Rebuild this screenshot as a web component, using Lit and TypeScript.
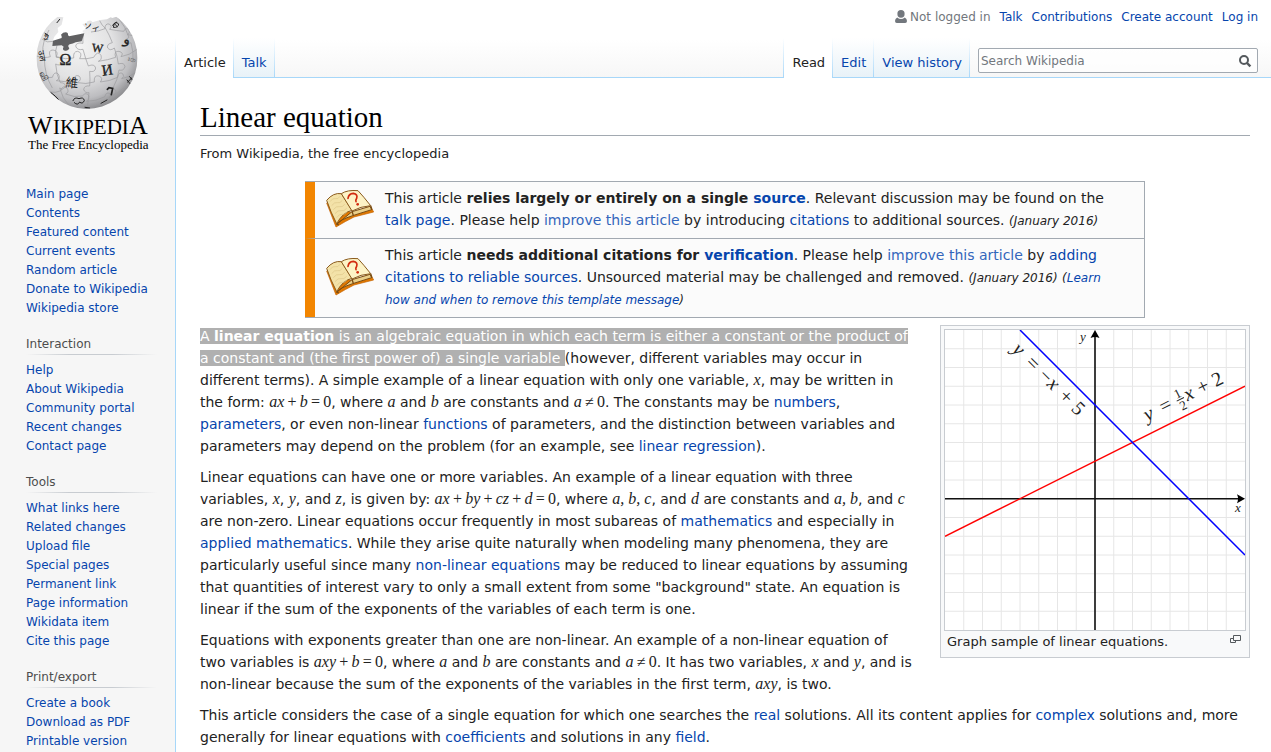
import { LitElement, html, svg, css } from "lit";
import { customElement } from "lit/decorators.js";

@customElement("wiki-logo")
class WikiLogo extends LitElement {
  static styles = css`
    :host { display: block; }
    svg { display: block; width: 160px; height: 160px; }
    .word { font-family: "Liberation Serif", serif; fill: #000; }
    .glyph { font-family: "Liberation Serif", "Noto Sans CJK TC", serif; fill: #222; }
  `;
  render() {
    return html`<svg viewBox="0 0 160 160" role="img" aria-label="Wikipedia, The Free Encyclopedia">
      <defs>
        <radialGradient id="ball" cx="0.42" cy="0.36" r="0.66">
          <stop offset="0" stop-color="#f4f4f4" />
          <stop offset="0.5" stop-color="#e2e2e3" />
          <stop offset="0.8" stop-color="#bdbdc0" />
          <stop offset="1" stop-color="#858588" />
        </radialGradient>
        <clipPath id="globe">
          <path d="M103 22 L86 20 A153 153 0 0 0 172 297 A153 153 0 0 0 262 20 L250 24 L245 22 L234 28 L214 30 L190 37 Q188 30 180 32 Q171 33 174 40 L160 42 L166 50 Q176 54 166 59 L160 63 L166 72 L130 80 L71 94 L76 80 L88 66 L86 54 L98 44 Z" />
        </clipPath>
      </defs>
      <g transform="translate(21 10) scale(0.33333)">
        <g clip-path="url(#globe)">
          <rect x="15" y="0" width="315" height="300" fill="url(#ball)" />
          <g fill="none" stroke="#9a9a9d" stroke-width="2">
            <path d="M22 138 q25 8 42 2 q-8 -20 8 -20 q18 2 10 20 q28 10 52 4 q-2 -20 12 -20 q16 4 6 22 q22 2 42 -4 q12 -22 22 -6 q4 14 -8 18 q30 -4 52 -12 q-6 -20 10 -18 q16 4 6 16 q26 -4 48 -22" />
            <path d="M26 196 q22 12 44 6 q6 -20 18 -10 q8 14 -6 20 q26 6 52 0 q2 -20 16 -14 q10 10 -4 20 q24 6 50 -2 q-2 -22 14 -18 q14 6 4 18 q28 -2 52 -14 q4 -20 16 -10 q6 8 -4 14 q22 -4 42 -18" />
            <path d="M60 246 q20 4 36 -4 q4 -18 18 -8 q8 12 -4 18 q26 12 50 6 q12 -14 20 0 q2 12 -8 16 q30 0 56 -14 q2 -14 14 -10 q8 8 0 12 q20 -8 42 -28" />
            <path d="M40 88 q14 12 34 6 M186 66 q24 -2 42 -10 q0 -16 12 -14 q12 6 2 16 q20 4 42 6 q6 -14 16 -4 q4 10 -4 14 l22 4" />
            <path d="M84 106 q-8 20 -2 36 q18 0 18 14 q-6 14 -20 6 q2 34 14 56 q18 0 14 14 q-8 10 -16 2 q8 32 28 52" />
            <path d="M164 70 q-4 20 -2 30 q-20 -4 -22 8 q4 14 22 10 q8 30 16 50 q18 -8 22 6 q-2 14 -18 10 q2 26 0 44 q-16 -2 -18 10 q4 12 16 10 q-2 30 -6 46" />
            <path d="M212 32 q6 14 18 24 q12 20 20 42 q-18 4 -14 16 q8 10 20 0 q10 26 12 48 q18 -6 20 8 q-4 14 -18 10 q-4 30 -18 54 q14 8 6 18 l-18 10" />
            <path d="M268 24 q22 26 32 58 q-14 6 -10 16 q6 8 16 0 q8 26 6 60 M60 60 q-22 40 -18 66 q-12 4 -8 14 q6 8 12 4 q0 50 24 90" />
          </g>
          <g class="glyph" font-size="30" text-anchor="middle">
            <text x="109" y="166" font-size="48" stroke="#222">Ω</text>
            <text x="204" y="126" font-size="36" transform="rotate(6 204 127)" stroke="#222">W</text>
            <text x="237" y="195" font-size="46" transform="rotate(-8 237 195)" stroke="#222">И</text>
            <text x="128" y="232" font-size="38" transform="rotate(5 128 232)">維</text>
            <text x="291" y="100" font-size="40" transform="rotate(14 291 95)" stroke="#222">و</text>
            <text x="186" y="60" font-size="26" transform="rotate(14 186 60)">ソィ</text>
            <text x="38" y="146" font-size="26" transform="rotate(80 38 138)">उल</text>
            <text x="52" y="84" font-size="26" transform="rotate(-40 52 80)">ي</text>
            <text x="44" y="208" font-size="26" transform="rotate(65 44 200)">வி</text>
            <text x="309" y="160" font-size="24" transform="rotate(-80 309 150)" fill="#777">ទី</text>
          </g>
          <g fill="none" stroke="#222" stroke-width="3" stroke-linecap="round">
            <path d="M235 238 l5 -5 l11 2 q-2 10 -4 19" stroke-width="5" />
            <path d="M251 46 q8 -14 18 -4 q-2 12 -16 10 q0 -14 10 -16 m-6 6 l8 8" />
            <path d="M132 272 q4 -12 18 -6 q14 -6 16 6 q-6 12 -14 4 q-6 12 -16 2 M216 280 l18 -10 M66 248 q14 10 22 20" />
            <path d="M296 216 l12 -12 m-14 6 l10 12 m-2 -22 l8 10 M168 292 l14 2 M84 38 l8 -10 M48 70 l10 6" />
          </g>
        </g>
        <path d="M72 92 L98 84 Q99 78 96 74 Q102 67 110 67 Q118 67 117 75 L120 79 L166 70 L158 94 L140 97 Q132 102 122 103 Q114 107 121 115 Q118 124 108 122 Q98 119 104 110 L98 106 L70 108 Z" fill="#606062" />
      </g>
      <g class="word">
        <text x="20" y="134" font-size="26">W</text>
        <text x="45" y="134" font-size="21">IKIPEDI</text>
        <text x="121" y="134" font-size="26">A</text>
        <text x="20" y="149" font-size="13">The Free Encyclopedia</text>
      </g>
    </svg>`;
  }
}

@customElement("book-icon")
class BookIcon extends LitElement {
  static styles = css`
    :host { display: block; }
    svg { display: block; width: 50px; height: 40px; }
  `;
  render() {
    return html`<svg viewBox="0 0 150 120" aria-hidden="true">
      <path d="M2 42 L30 114 Q60 96 84 84 L143 69 L138 60 L80 72 L12 46 Z" fill="#e07800" stroke="#c46200" stroke-width="2" />
      <path d="M32 106 Q42 92 80 80 L137 62 L132 52 L78 68 Z" fill="#e9cf8a" stroke="#7a4b12" stroke-width="3" />
      <path d="M2 34 Q22 10 46 14 L78 64 Q50 70 32 104 Q14 70 2 34 Z" fill="#f3e2a8" stroke="#8a5a1c" stroke-width="3" stroke-linejoin="round" />
      <path d="M46 14 Q64 2 96 5 Q112 22 134 50 Q104 52 78 66 Z" fill="#fdf3c6" stroke="#8a5a1c" stroke-width="3" stroke-linejoin="round" />
      <path d="M78 66 L82 80 M134 50 L138 62 M32 104 L38 108" stroke="#7a4b12" stroke-width="4" />
      <path d="M12 38 q8 -12 16 -9 t14 -7 M17 50 q9 -12 17 -9 t15 -7 M22 62 q9 -12 18 -9 t16 -7 M27 74 q9 -12 18 -9 t17 -7 M32 86 q8 -12 16 -10 t16 -8" fill="none" stroke="#dcc588" stroke-width="2" />
      <path d="M66 28 Q68 14 82 13 Q96 16 92 28 Q88 34 90 38" fill="none" stroke="#d22c10" stroke-width="5" stroke-linecap="round" />
      <circle cx="95" cy="46" r="4" fill="#d22c10" />
    </svg>`;
  }
}

@customElement("line-graph")
class LineGraph extends LitElement {
  static styles = css`
    :host { display: block; }
    svg { display: block; width: 100%; background: #fff; }
    .math { font-family: "Liberation Serif", serif; fill: #222; text-anchor: middle; }
    .var { font-style: italic; }
  `;
  render() {
    const steps = Array.from({ length: 15 }, (_, i) => (i + 1) * 18.75);
    return html`<svg viewBox="0 0 300 300" role="img" aria-label="Two intersecting lines">
      ${steps.map((p) => svg`<path d="M${p} 0V300M0 ${p}H300" stroke="#e6e6e6" stroke-width="1" />`)}
      <path d="M150 300V3M0 168.75H296" stroke="#111" stroke-width="1.6" />
      <path d="M150 0L154.5 8Q150 6 145.5 8Z M300 168.75L292 164.2Q294 168.75 292 173.2Z" fill="#000" />
      <path d="M0 206.25L300 56.25" stroke="#f00" stroke-width="1.5" />
      <path d="M75 0L300 225" stroke="#00f" stroke-width="1.5" />
      <g class="math" font-size="13">
        <text class="var" x="138" y="11">y</text>
        <text class="var" x="293" y="182">x</text>
      </g>
      <g class="math" font-size="20" transform="translate(73 20) rotate(45)">
        <text class="var" x="0" y="5">y</text>
        <text x="20" y="5">=</text>
        <text x="38" y="5">−</text>
        <text class="var" x="49" y="5">x</text>
        <text x="67" y="5">+</text>
        <text x="84" y="5">5</text>
      </g>
      <g class="math" font-size="20" transform="translate(204 85) rotate(-26.57)">
        <text class="var" x="0" y="5">y</text>
        <text x="19" y="5">=</text>
        <text x="35" y="-2" font-size="13">1</text>
        <path d="M31 0H39" stroke="#222" stroke-width="1" />
        <text x="35" y="11" font-size="13">2</text>
        <text class="var" x="45" y="5">x</text>
        <text x="61" y="5">+</text>
        <text x="77" y="5">2</text>
      </g>
    </svg>`;
  }
}

const portals = [
  { title: "", links: ["Main page", "Contents", "Featured content", "Current events", "Random article", "Donate to Wikipedia", "Wikipedia store"] },
  { title: "Interaction", links: ["Help", "About Wikipedia", "Community portal", "Recent changes", "Contact page"] },
  { title: "Tools", links: ["What links here", "Related changes", "Upload file", "Special pages", "Permanent link", "Page information", "Wikidata item", "Cite this page"] },
  { title: "Print/export", links: ["Create a book", "Download as PDF", "Printable version"] },
];

const link = (text: string, cls = "") => html`<a class=${cls} href="#">${text}</a>`;
const v = (text: string) => html`<i class="math">${text}</i>`;

// Sets a formula with thin spaces round its operators; letters are italic, the rest upright.
const formula = (text: string) => html`<i class="math">${text
  .split(" ")
  .map((part, i) => html`${i ? "\u2009" : ""}${/[a-z]/.test(part) ? part : html`<b>${part}</b>`}`)}</i>`;

@customElement("app-root")
class AppRoot extends LitElement {
  static styles = css`
    :host {
      display: block;
      font-family: "DejaVu Sans", sans-serif;
      font-size: 14px;
      line-height: 22px;
      color: #222;
    }
    a { color: #0645ad; text-decoration: none; }
    a:hover { text-decoration: underline; }
    a.ext { color: #36b; }
    ul { list-style: none; margin: 0; padding: 0; }
    .page {
      display: grid;
      grid-template-columns: 175px minmax(0, 1fr);
      min-height: 100vh;
      background: linear-gradient(#fff 50%, #f6f6f6 100%) top / 100% 80px no-repeat #f6f6f6;
    }

    .side { padding: 0 0 0 26px; font-size: 12px; line-height: 19px; }
    .logo { display: block; margin: 0 0 25px -18px; }
    .portal { margin-bottom: 17px; }
    .portal:last-child { margin-bottom: 0; }
    .portal h3 {
      margin: 0 18px 6px 0;
      padding-bottom: 1px;
      font-size: 12px;
      font-weight: normal;
      color: #4d4d4d;
      background: linear-gradient(to right, rgba(200, 204, 209, 0), #c8ccd1 33%, #c8ccd1 66%, rgba(200, 204, 209, 0)) bottom / 100% 1px no-repeat;
    }

    .column { display: flex; flex-direction: column; }
    .personal {
      display: flex;
      justify-content: flex-end;
      align-items: center;
      gap: 9px;
      height: 38px;
      padding: 0 13px 4px 0;
      box-sizing: border-box;
      font-size: 12px;
    }
    .anon { display: flex; align-items: center; gap: 3px; color: #72777d; }
    .anon svg { width: 12px; height: 14px; }

    .bar { display: flex; height: 40px; font-size: 13px; }
    .tabs { display: flex; }
    .tabs::before, .tabs li::after {
      content: "";
      width: 1px;
      background: linear-gradient(#fff, #a7d7f9);
    }
    .tabs li { display: flex; }
    .tabs a {
      display: block;
      padding: 14px 7px 3px 8px;
      border-bottom: 1px solid #a7d7f9;
      background: linear-gradient(#fff, #e8f2f8);
      white-space: nowrap;
    }
    .tabs a.on { color: #222; background: #fff; border-color: #fff; }
    .gap { flex: 1; border-bottom: 1px solid #a7d7f9; }
    .find {
      flex: 0 1 280px;
      padding: 10px 13px 0 8px;
      border-bottom: 1px solid #a7d7f9;
    }
    .box {
      display: flex;
      align-items: center;
      height: 25px;
      box-sizing: border-box;
      border: 1px solid #a2a9b1;
      border-radius: 2px;
      background: rgba(255, 255, 255, 0.7);
    }
    .box input {
      flex: 1;
      min-width: 0;
      border: 0;
      padding: 0 2px;
      background: none;
      outline: none;
      font: 12px "DejaVu Sans", sans-serif;
      color: #222;
    }
    .box input::placeholder { color: #72777d; opacity: 1; }
    .box button { display: flex; border: 0; padding: 0 5px; background: none; }
    .box svg { width: 14px; height: 14px; }

    .content {
      flex: 1;
      padding: 21px 21px 3px 24px;
      border-left: 1px solid #a7d7f9;
      background: #fff;
    }
    h1 {
      margin: 0;
      border-bottom: 1px solid #a2a9b1;
      font: 29px/36px "Linux Libertine", "Liberation Serif", serif;
      color: #000;
    }
    .sub { margin: 8px 0 17px; font-size: 13px; line-height: 20px; }

    .notices { width: 80%; box-sizing: border-box; margin: 0 auto 7px; border: 1px solid #a2a9b1; border-left: 0; background: #fbfbfb; }
    .notice { display: flex; align-items: center; border-left: 10px solid #f28500; padding: 5px 24px 7px 11px; }
    .notice + .notice { border-top: 1px solid #a2a9b1; }
    .notice p { margin: 0 0 0 9px; flex: 1; }
    .notice small { font-size: 12px; line-height: 12px; font-style: italic; }

    .thumb {
      float: right;
      width: 302px;
      margin: 0 0 7px 24px;
      padding: 3px;
      border: 1px solid #c8ccd1;
      background: #f8f9fa;
      font-size: 13px;
    }
    .frame { border: 1px solid #c8ccd1; }
    figcaption { display: flex; justify-content: space-between; padding: 0 5px 1px 3px; }
    figcaption svg { width: 11px; height: 9px; margin-top: 4px; }
    .content > p { margin: 0 0 9px; }
    .content > p:last-child { margin: 0; }
    .marked { background: #b0b0b0; color: #fff; }
    .math { font: italic 16px/16px "Liberation Serif", serif; white-space: nowrap; }
    .math b { font-weight: normal; font-style: normal; }
  `;

  tab(text: string, on = false) {
    return html`<li><a class=${on ? "on" : ""} href="#">${text}</a></li>`;
  }

  render() {
    return html`<div class="page">
      <nav class="side">
        <a class="logo" href="#"><wiki-logo></wiki-logo></a>
        ${portals.map((p) => html`<section class="portal">
          ${p.title ? html`<h3>${p.title}</h3>` : ""}
          <ul>${p.links.map((l) => html`<li>${link(l)}</li>`)}</ul>
        </section>`)}
      </nav>
      <div class="column">
        <div class="personal">
          <span class="anon">
            <svg viewBox="0 0 12 14" aria-hidden="true"><path d="M6 0a3.6 3.8 0 0 1 3.6 3.9A3.6 3.8 0 0 1 6 7.7 3.6 3.8 0 0 1 2.4 3.9 3.6 3.8 0 0 1 6 0ZM2.2 7.4Q6 10.4 9.8 7.4 12 8.4 12 11 12 13 10.2 13H1.8Q0 13 0 11 0 8.4 2.2 7.4Z" fill="#72777d" /></svg>
            Not logged in
          </span>
          ${["Talk", "Contributions", "Create account", "Log in"].map((l) => link(l))}
        </div>
        <div class="bar">
          <ul class="tabs">${this.tab("Article", true)}${this.tab("Talk")}</ul>
          <div class="gap"></div>
          <ul class="tabs">${this.tab("Read", true)}${this.tab("Edit")}${this.tab("View history")}</ul>
          <form class="find" role="search">
            <div class="box">
              <input type="search" placeholder="Search Wikipedia" aria-label="Search Wikipedia" />
              <button type="button" aria-label="Search">
                <svg viewBox="0 0 14 14" aria-hidden="true"><circle cx="6" cy="6" r="4" fill="none" stroke="#54595d" stroke-width="2" /><path d="M9 9L12.4 12.4" stroke="#54595d" stroke-width="2.4" /></svg>
              </button>
            </div>
          </form>
        </div>
        <main class="content">
          <h1>Linear equation</h1>
          <div class="sub">From Wikipedia, the free encyclopedia</div>
          <div class="notices">
            <div class="notice">
              <book-icon></book-icon>
              <p>This article <b>relies largely or entirely on a single ${link("source")}</b>. Relevant discussion may be found on the ${link("talk page")}. Please help ${link("improve this article", "ext")} by introducing ${link("citations")} to additional sources. <small>(January 2016)</small></p>
            </div>
            <div class="notice">
              <book-icon></book-icon>
              <p>This article <b>needs additional citations for ${link("verification")}</b>. Please help ${link("improve this article", "ext")} by ${link("adding citations to reliable sources")}. Unsourced material may be challenged and removed. <small>(January 2016)</small> <small>(${link("Learn how and when to remove this template message")})</small></p>
            </div>
          </div>
          <figure class="thumb">
            <div class="frame"><line-graph></line-graph></div>
            <figcaption>Graph sample of linear equations.
              <svg viewBox="0 0 11 9" aria-hidden="true"><path d="M3.5 .5h7v5h-7zM3.5 3.5h-3v4h5v-2" fill="none" stroke="#54595d" /></svg>
            </figcaption>
          </figure>
          <p><span class="marked">A <b>linear equation</b> is an algebraic equation in which each term is either a constant or the product of a constant and (the first power of) a single variable </span>(however, different variables may occur in different terms). A simple example of a linear equation with only one variable, ${v("x")}, may be written in the form: ${formula("ax + b = 0")}, where ${v("a")} and ${v("b")} are constants and ${formula("a ≠ 0")}. The constants may be ${link("numbers")}, ${link("parameters")}, or even non-linear ${link("functions")} of parameters, and the distinction between variables and parameters may depend on the problem (for an example, see ${link("linear regression")}).</p>
          <p>Linear equations can have one or more variables. An example of a linear equation with three variables, ${v("x")}, ${v("y")}, and ${v("z")}, is given by: ${formula("ax + by + cz + d = 0")}, where ${v("a, b, c")}, and ${v("d")} are constants and ${v("a, b")}, and ${v("c")} are non-zero. Linear equations occur frequently in most subareas of ${link("mathematics")} and especially in ${link("applied mathematics")}. While they arise quite naturally when modeling many phenomena, they are particularly useful since many ${link("non-linear equations")} may be reduced to linear equations by assuming that quantities of interest vary to only a small extent from some "background" state. An equation is linear if the sum of the exponents of the variables of each term is one.</p>
          <p>Equations with exponents greater than one are non-linear. An example of a non-linear equation of two variables is ${formula("axy + b = 0")}, where ${v("a")} and ${v("b")} are constants and ${formula("a ≠ 0")}. It has two variables, ${v("x")} and ${v("y")}, and is non-linear because the sum of the exponents of the variables in the first term, ${v("axy")}, is two.</p>
          <p>This article considers the case of a single equation for which one searches the ${link("real")} solutions. All its content applies for ${link("complex")} solutions and, more generally for linear equations with ${link("coefficients")} and solutions in any ${link("field")}.</p>
        </main>
      </div>
    </div>`;
  }
}
